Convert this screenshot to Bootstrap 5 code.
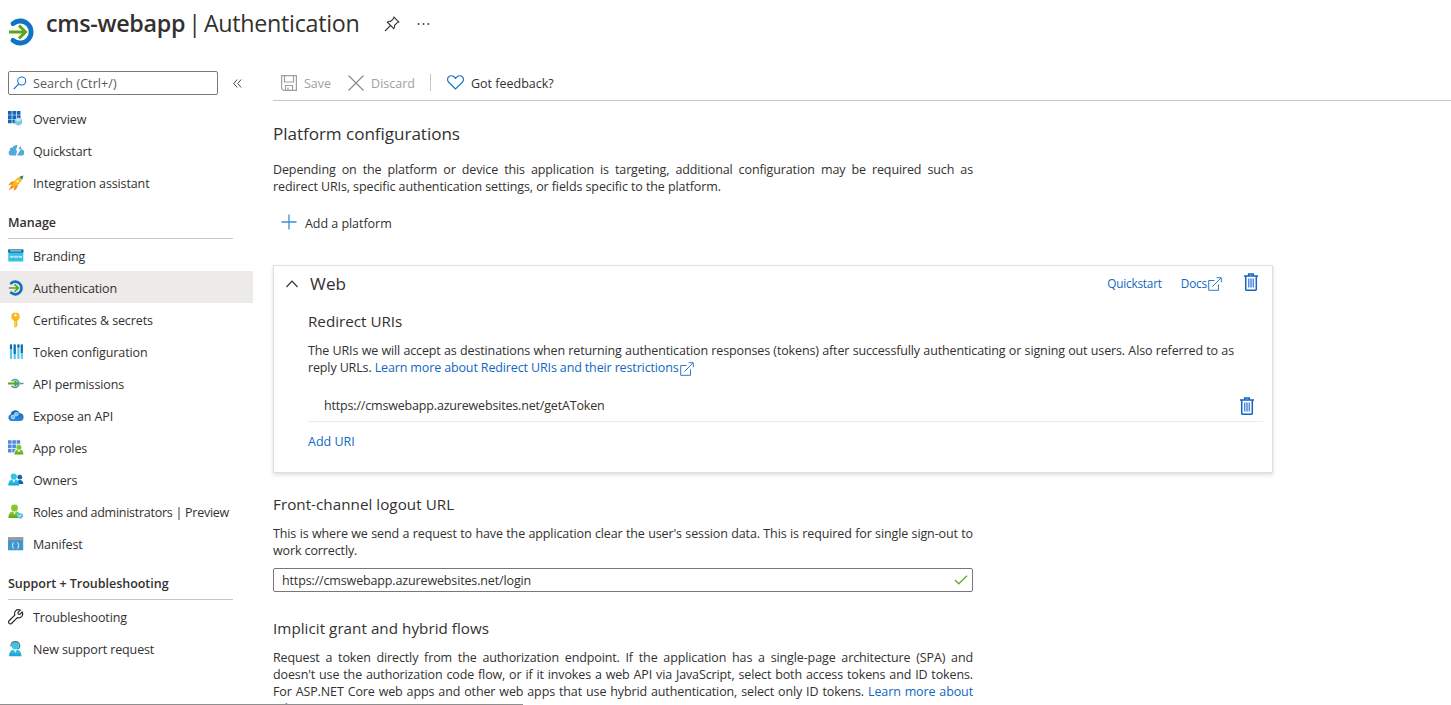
<!DOCTYPE html>
<html lang="en">
<head>
<meta charset="utf-8">
<meta name="viewport" content="width=device-width, initial-scale=1">
<title>cms-webapp | Authentication</title>
<link href="https://cdn.jsdelivr.net/npm/bootstrap@5.3.0/dist/css/bootstrap.min.css" rel="stylesheet">
<style>
  body { font: 12.5px/17px "Open Sans", "Noto Sans", sans-serif; letter-spacing: -.12px; color: #323130; height: 705px; overflow: hidden; background: #fff; }
  svg { display: block; flex: none; }
  a { color: #1068bf; text-decoration: none; }
  .blade-head { height: 71px; padding-left: 8px; }
  .blade-icon { margin-top: 18px; }
  .blade-title { font-size: 23.3px; line-height: 32px; margin: 7px 0 0 11px; font-weight: 400; letter-spacing: -.3px; word-spacing: -2.6px; white-space: nowrap; }
  .blade-title b { font-weight: 600; }
  .pin { margin: 16px 0 0 25px; }
  .dots { margin: 22px 0 0 17px; }
  .side { width: 253px; flex: none; }
  .search-row { height: 32px; padding-left: 8px; }
  .search-box { width: 210px; height: 24px; border: 1px solid #7a7876; border-radius: 2px; padding-left: 4px; color: #5b5a58; letter-spacing: .08px; }
  .search-box span { margin-left: 6px; }
  .collapse-mark { margin: 8px 0 0 15px; }
  .side-link { height: 32px; padding-left: 8px; color: #323130; white-space: nowrap; }
  .side-link span { margin-left: 9px; }
  .side-group .side-link { padding-top: 2px; }
  .side-link .tight { letter-spacing: -.26px; }
  .side-link.current { background: #edebe9; }
  .side-title { height: 41px; margin: 0 20px 0 8px; padding-top: 16px; border-bottom: 1px solid #c8c6c4; font-weight: 600; letter-spacing: -.02px; }
  .side-title.first { height: 40px; padding-top: 15px; }
  .content { margin-left: 20px; min-width: 0; }
  .toolbar { height: 30px; border-bottom: 1px solid #c8c6c4; padding: 0 0 6px 8px; white-space: nowrap; letter-spacing: 0; }
  .toolbar span { margin-left: 7px; padding-top: 2px; }
  .toolbar .off { color: #a19f9d; }
  .sep { width: 1px; height: 17px; background: #c8c6c4; margin: 0 16px 0 15px; }
  .discard-icon { margin-left: 17px; }
  h2, h3 { font-weight: 400; margin: 0; }
  h2 { font-size: 17.1px; line-height: 24px; letter-spacing: -.05px; }
  h3 { font-size: 15.2px; line-height: 20px; letter-spacing: .04px; }
  .w700 { width: 700px; }
  .full { display: block; text-align: justify; text-align-last: justify; white-space: nowrap; }
  .add-platform { margin: 18px 0 0 8px; height: 18px; letter-spacing: -.04px; }
  .add-platform span { padding-top: 2px; }
  .platform { width: 1000px; height: 208px; border: 1px solid #e1dfdd; box-shadow: 0 2px 4px rgba(0,0,0,.13); margin-top: 34px; }
  .platform-head { height: 36px; padding: 0 14px 0 12px; }
  .platform-head h2 { margin-left: 12px; letter-spacing: .1px; }
  .platform-head a { font-size: 11.8px; letter-spacing: -.2px; margin-top: -1px; }
  .platform-body { margin-left: 34px; }
  .platform-body h3 { padding-top: 9px; letter-spacing: 0; }
  .uri-note { margin-top: 11px; width: 926px; }
  .uri-note span { letter-spacing: -.135px; }
  .url { letter-spacing: -.175px; }
  .logout .url { letter-spacing: -.14px; }
  .uri-row { height: 31px; margin: 15px 9px 0 34px; border-bottom: 1px solid #edebe9; padding: 0 9px 1px 16px; }
  .add-uri { display: block; margin: 11px 0 0 34px; letter-spacing: 0; }
  .section-title { margin: 21px 0 11px; }
  .section-title.grant { margin: 26px 0 11px; }
  .logout { height: 24px; border: 1px solid #7a7876; border-radius: 2px; padding: 0 4px 0 8px; margin-top: 9px; }
  .status-edge { bottom: 0; left: 0; width: 523px; height: 1px; background: #8f8f8f; }
</style>
</head>
<body class="position-relative">
<svg width="0" height="0" class="position-absolute">
  <defs>
    <linearGradient id="blueFade" x1="0" y1="0" x2="0" y2="1"><stop offset="0" stop-color="#0a63b5"/><stop offset="1" stop-color="#2b8be0"/></linearGradient>
    <linearGradient id="cyanFade" x1="0" y1="0" x2="0" y2="1"><stop offset="0" stop-color="#35c6ea"/><stop offset="1" stop-color="#1d9fd4"/></linearGradient>
    <linearGradient id="greenFade" x1="0" y1="0" x2="0" y2="1"><stop offset="0" stop-color="#8fce36"/><stop offset="1" stop-color="#5fa516"/></linearGradient>
    <symbol id="signin" viewBox="0 0 27 28">
      <path d="M5 5.6A11 11 0 1 1 5 22.4" fill="none" stroke="#0f74c4" stroke-width="4.8" stroke-linecap="round"/>
      <path d="M1 14H17M11 7.5L17.5 14L11 20.5" fill="none" stroke="#5ea51a" stroke-width="3"/>
    </symbol>
    <symbol id="bin" viewBox="0 0 14 18">
      <path d="M1.7 3.5V16.5Q1.7 17.2 2.5 17.2H11.5Q12.3 17.2 12.3 16.5V3.5M0 3H14M4.7 3V1H9.3V3" fill="none" stroke="#1463c0" stroke-width="1.5"/>
      <path d="M4.7 5.5V14.5M7 5.5V14.5M9.3 5.5V14.5" stroke="#4c8be0" stroke-width="1.5"/>
    </symbol>
    <symbol id="outlink" viewBox="0 0 14 14">
      <path d="M6.5 3.5H.7V13.3H10.5V7.5M4.3 9.7L12.8 1.2M8.7 .7H13.3V5.3" fill="none" stroke="#3378c4" stroke-width="1"/>
    </symbol>
  </defs>
</svg>

<header class="blade-head d-flex align-items-start">
  <svg class="blade-icon" width="27" height="28"><use href="#signin"/></svg>
  <h1 class="blade-title"><b>cms-webapp</b> | Authentication</h1>
  <svg class="pin" width="16" height="16" viewBox="0 0 16 16" fill="none" stroke="#323130" stroke-width="1.1"><path d="M10 1.2L14.8 6L13.3 6.6L10.6 9.3Q11 11.2 9.8 12.6L3.4 6.2Q4.8 5 6.7 5.4L9.4 2.7ZM6.4 9.6L1 15"/></svg>
  <svg class="dots" width="13" height="4" viewBox="0 0 13 4" fill="#484644"><circle cx="1.5" cy="2" r="1"/><circle cx="6.5" cy="2" r="1"/><circle cx="11.3" cy="2" r="1"/></svg>
</header>

<div class="d-flex">
  <nav class="side">
    <div class="search-row d-flex align-items-start">
      <div class="search-box d-flex align-items-center">
        <svg width="14" height="14" viewBox="0 0 14 14" fill="none" stroke="#1a73c9" stroke-width="1.1"><circle cx="8.7" cy="5" r="4"/><path d="M5.8 7.9L.8 13"/></svg>
        <span>Search (Ctrl+/)</span>
      </div>
      <svg class="collapse-mark" width="9" height="9" viewBox="0 0 9 9" fill="none" stroke="#484644"><path d="M4.2 .5L.7 4.5L4.2 8.5M8.2 .5L4.7 4.5L8.2 8.5"/></svg>
    </div>
    <a href="#" class="side-link d-flex align-items-center">
      <svg width="16" height="16" viewBox="0 0 16 16"><path fill="#1565b5" d="M0 0h3.7v3.7H0zM4.4 0h3.7v3.7H4.4zM8.8 0h3.7v3.7H8.8zM0 4.3h3.7V8H0zM4.4 4.3h3.7V8H4.4zM8.8 4.3h3.7V8H8.8zM0 8.6h3.7v3.7H0zM4.4 8.6h3.7v3.7H4.4z"/><path fill="#7cc8ea" d="M10.3 6.6L14 8.7v4l-3.7 2L6.6 12.7v-4z"/><path fill="#c4e8f7" d="M10.3 6.6L14 8.7l-3.7 2L6.6 8.7z"/></svg><span>Overview</span></a>
    <a href="#" class="side-link d-flex align-items-center">
      <svg width="16" height="16" viewBox="0 0 16 16"><path fill="#50abd8" d="M3 12.6A2.9 2.9 0 0 1 1.8 7.4 2.6 2.6 0 0 1 4.4 4.6 3.6 3.6 0 0 1 7.6 2.2Q8.8 2 9.6 2.3L7.8 7.5H9.2L8 12.6ZM9 12.6L12.8 6.2H10.8L12 3Q13.6 4.2 13.6 6.6A3 3 0 0 1 13 12.6Z"/></svg><span>Quickstart</span></a>
    <a href="#" class="side-link d-flex align-items-center">
      <svg width="16" height="16" viewBox="0 0 16 16"><path fill="#f78d1e" d="M6 6.2Q2.5 6 .3 10.2L4 9.6L.6 15.2L6.3 12.3L5.7 15.8Q9.8 13.8 9.8 10Z"/><path fill="#fdb813" d="M3.8 10.2Q7 3.6 12 1.7L14.3 4Q12.3 9 6 12.3Z"/><path fill="#1f7190" d="M11.5 1.8L15.5.5L14.2 4.5Z"/><circle cx="9.6" cy="6.3" r="1.3" fill="#fff3c4"/></svg><span>Integration assistant</span></a>

    <div class="side-title first">Manage</div>
    <div class="side-group">
    <a href="#" class="side-link d-flex align-items-center">
      <svg width="16" height="16" viewBox="0 0 16 16"><path fill="#34bfe3" d="M.3 1.5h15v12H.3z"/><path fill="#0e5a94" d="M.3 1.5h15v3H.3z"/><path fill="#d8f0fa" d="M2 2.4h11.6v1H2z"/><path d="M2 7.8l.9 2 .9-2 .9 2 .9-2M6.2 7.8l.9 2 .9-2 .9 2 .9-2M10.4 7.8l.9 2 .9-2 .9 2 .9-2" fill="none" stroke="#dff6fd" stroke-width=".8"/></svg><span>Branding</span></a>
    <a href="#" class="side-link current d-flex align-items-center"><svg width="16" height="16"><use href="#signin"/></svg><span>Authentication</span></a>
    <a href="#" class="side-link d-flex align-items-center">
      <svg width="16" height="16" viewBox="0 0 16 16"><path fill="#fbb81c" fill-rule="evenodd" d="M5 .8H10Q12 2.5 11.8 5Q11.6 7.6 9.3 8.8V14L7.5 15.8L6 14V8.8Q3.4 7.6 3.2 5Q3 2.5 5 .8ZM7.5 2a1.2 1.2 0 1 0 .01 0Z"/><path d="M7.2 9.5V14" stroke="#ffe48a"/></svg><span>Certificates &amp; secrets</span></a>
    <a href="#" class="side-link d-flex align-items-center">
      <svg width="16" height="16" viewBox="0 0 16 16" fill="none" stroke-width="2.1"><path stroke="#59c9ea" d="M3 .5V15M6.7 .5V15M10.4 .5V15M13.8 .5V15"/><path stroke="#1467b0" d="M3 .5V5M6.7 .5V10M10.4 .5V3.5M13.8 .5V9"/></svg><span>Token configuration</span></a>
    <a href="#" class="side-link d-flex align-items-center">
      <svg width="16" height="16" viewBox="0 0 16 16" fill="none"><path d="M3.7 5.2A4 4 0 1 1 3.7 9.8M12 7.5H15.5" stroke="#4a96c4" stroke-width="1.6"/><path d="M0 7.5H8M6.5 5L9.5 7.5L6.5 10" stroke="#5ea51a" stroke-width="1.8"/></svg><span>API permissions</span></a>
    <a href="#" class="side-link d-flex align-items-center">
      <svg width="16" height="16" viewBox="0 0 16 16"><path fill="url(#blueFade)" d="M3.2 13A3.3 3.3 0 0 1 2.6 6.6 4.7 4.7 0 0 1 11.6 5.2 3.9 3.9 0 0 1 11.8 13Z"/><circle cx="8.4" cy="6.2" r="1.7" fill="#7fb6ea" stroke="#c6e2fa" stroke-width="1"/><circle cx="5" cy="9" r="1.8" fill="#7fb6ea" stroke="#c6e2fa" stroke-width="1"/></svg><span>Expose an API</span></a>
    <a href="#" class="side-link d-flex align-items-center">
      <svg width="16" height="16" viewBox="0 0 16 16"><path fill="#4f88dd" d="M0 .2h3.6v3.6H0zM4.3 .2h3.6v3.6H4.3zM8.6 .2h3.6v3.6H8.6zM0 4.5h3.6v3.6H0zM4.3 4.5h3.6v3.6H4.3zM8.6 4.5h3.6v3.6H8.6zM0 8.8h3.6v3.6H0zM4.3 8.8h3.6v3.6H4.3z"/><path fill="#fff" d="M5.6 15Q6 9.5 8.3 9Q7.5 4.2 11 4Q14.5 4.2 14 9Q16 10 16 15Z"/><path fill="url(#greenFade)" d="M6.4 14.4Q6.6 10.2 9.3 9.6H12.7Q15.2 10.2 15.4 14.4Z"/><circle cx="10.9" cy="7.3" r="2.5" fill="#83c42c"/><path fill="#fff" d="M9.6 9.8H12.2L10.9 12.6Z"/></svg><span>App roles</span></a>
    <a href="#" class="side-link d-flex align-items-center">
      <svg width="16" height="16" viewBox="0 0 16 16"><circle cx="11.8" cy="5.2" r="2.4" fill="#1264ae"/><path fill="#1264ae" d="M9 12Q9.2 8 11.8 8Q15 8 15.3 12Z"/><circle cx="5.8" cy="4.6" r="3.1" fill="#35c0e6"/><path fill="url(#cyanFade)" d="M.3 13.5Q.5 8.3 3.6 7.6H8Q11 8.3 11.3 13.5Z"/><path fill="#fff" d="M4.5 7.8H7.2L5.8 11Z"/></svg><span>Owners</span></a>
    <a href="#" class="side-link d-flex align-items-center">
      <svg width="16" height="16" viewBox="0 0 16 16"><circle cx="6.5" cy="4" r="3.4" fill="#86c72e"/><path fill="url(#greenFade)" d="M.4 14Q.5 8.3 4 7.5H9Q12.3 8.3 12.6 14Z"/><path fill="#e8f6d5" d="M5 7.6H8L6.5 11Z"/><path fill="#5bc4e8" d="M8 9.5L11.5 9L15 10V13L12.5 15L9.5 13Z"/><path d="M9.8 11.2l1.2 1.3 2.3-1.8" fill="none" stroke="#d5f1fb"/></svg><span class="tight">Roles and administrators | Preview</span></a>
    <a href="#" class="side-link d-flex align-items-center">
      <svg width="16" height="16" viewBox="0 0 16 16"><path fill="#3f97cc" d="M0 1.3h15.2v13H0z"/><path fill="#999b9c" d="M0 1.3h15.2v3H0z"/><path d="M5.8 6.5Q4.8 6.5 4.8 8T4 9.5Q4.8 9.5 4.8 11T5.8 12.3M9.3 6.5Q10.3 6.5 10.3 8T11.1 9.5Q10.3 9.5 10.3 11T9.3 12.3" fill="none" stroke="#d9f0fb" stroke-width="1"/></svg><span>Manifest</span></a>
    </div>

    <div class="side-title">Support + Troubleshooting</div>
    <div class="side-group">
    <a href="#" class="side-link d-flex align-items-center">
      <svg width="16" height="16" viewBox="0 0 16 16" fill="none" stroke="#2b2a29" stroke-width="1.2"><path d="M14.2 3L11.8 5.4L10.2 5L9.9 3.6L12.3 1.1Q9.5 0 7.6 1.9Q6 3.7 6.8 6.1L.9 12Q0 13.3 1.1 14.4Q2.3 15.5 3.5 14.5L9.3 8.6Q11.8 9.4 13.6 7.6Q15.4 5.6 14.2 3Z"/></svg><span>Troubleshooting</span></a>
    <a href="#" class="side-link d-flex align-items-center">
      <svg width="16" height="16" viewBox="0 0 16 16"><circle cx="7.3" cy="4.7" r="3.6" fill="#35c6ea"/><path fill="url(#cyanFade)" d="M1 15.2Q1.2 9.5 5 8.7H9.6Q13.3 9.5 13.5 15.2Z"/><path fill="#d9f5fc" d="M5.7 8.8H8.9L7.3 12Z"/><path d="M3 5.6Q2.6 .6 7.3 .6T11.7 5.6Q11.5 7.5 9.5 8" fill="none" stroke="#4e6e7a" stroke-width="1.1"/></svg><span>New support request</span></a>
    </div>
  </nav>

  <main class="content flex-grow-1">
    <div class="toolbar d-flex align-items-center">
      <svg width="16" height="16" viewBox="0 0 16 16" fill="none" stroke="#a19f9d" stroke-width="1.2"><path d="M.6 .6H15.4V15.4H2.6L.6 13.4ZM3.5 .6V7H12.5V.6M4.5 15V10.5H11.5V15M7 12.5V15"/></svg>
      <span class="off">Save</span>
      <svg class="discard-icon" width="16" height="16" viewBox="0 0 16 16" fill="none" stroke="#8a8886" stroke-width="1.1"><path d="M.5 .5L15.5 15.5M15.5 .5L.5 15.5"/></svg>
      <span class="off">Discard</span>
      <i class="sep"></i>
      <svg width="17" height="15" viewBox="0 0 17 15" fill="none" stroke="#1a73c9" stroke-width="1.2"><path d="M8.5 14L1.7 7.3A3.8 3.8 0 0 1 7 1.8L8.5 3.3L10 1.8A3.8 3.8 0 0 1 15.3 7.3Z"/></svg>
      <span>Got feedback?</span>
    </div>
    <h2 style="margin-top:21px">Platform configurations</h2>
    <p class="w700 mb-0" style="margin-top:15px"><span class="full">Depending on the platform or device this application is targeting, additional configuration may be required such as</span><span style="letter-spacing:-.095px">redirect URIs, specific authentication settings, or fields specific to the platform.</span></p>
    <div class="add-platform d-flex align-items-center">
      <svg width="16" height="16" viewBox="0 0 16 16" stroke="#3a8fd6" stroke-width="1.3"><path d="M8 .5V15.5M.5 8H15.5"/></svg>
      <span class="ms-2">Add a platform</span>
    </div>

    <section class="platform">
      <div class="platform-head d-flex align-items-center">
        <svg width="12" height="8" viewBox="0 0 12 8" fill="none" stroke="#323130" stroke-width="1.2"><path d="M.5 7L6 1.2L11.5 7"/></svg>
        <h2>Web</h2>
        <a href="#" class="ms-auto">Quickstart</a>
        <a href="#" style="margin-left:19px">Docs</a>
        <svg width="14" height="14" style="margin-left:1px"><use href="#outlink"/></svg>
        <svg width="14" height="18" style="margin:-4px 0 0 22px"><use href="#bin"/></svg>
      </div>
      <div class="platform-body">
        <h3>Redirect URIs</h3>
        <div class="uri-note"><span class="full">The URIs we will accept as destinations when returning authentication responses (tokens) after successfully authenticating or signing out users. Also referred to as</span>
          <div class="d-flex align-items-center"><span>reply URLs. <a href="#">Learn more about Redirect URIs and their restrictions</a></span><svg width="14" height="14" style="margin:2px 0 0 1px"><use href="#outlink"/></svg></div></div>
      </div>
      <div class="uri-row d-flex align-items-center justify-content-between"><span class="url">https://cmswebapp.azurewebsites.net/getAToken</span><svg width="14" height="18"><use href="#bin"/></svg></div>
      <a href="#" class="add-uri">Add URI</a>
    </section>

    <h3 class="section-title">Front-channel logout URL</h3>
    <p class="w700 mb-0"><span class="full">This is where we send a request to have the application clear the user's session data. This is required for single sign-out to</span>work correctly.</p>
    <div class="logout w700 d-flex align-items-center justify-content-between"><span class="url">https://cmswebapp.azurewebsites.net/login</span><svg width="14" height="10" viewBox="0 0 14 10" fill="none" stroke="#6aa728" stroke-width="1.3"><path d="M1 5L4.8 8.8L13 .8"/></svg></div>
    <h3 class="section-title grant">Implicit grant and hybrid flows</h3>
    <div class="w700"><span class="full">Request a token directly from the authorization endpoint. If the application has a single-page architecture (SPA) and</span><span class="full">doesn't use the authorization code flow, or if it invokes a web API via JavaScript, select both access tokens and ID tokens.</span><span class="full">For ASP.NET Core web apps and other web apps that use hybrid authentication, select only ID tokens. <a href="#">Learn more about</a></span><a href="#">tokens.</a></div>
  </main>
</div>
<div class="status-edge position-absolute"></div>
<script src="https://cdn.jsdelivr.net/npm/bootstrap@5.3.0/dist/js/bootstrap.bundle.min.js"></script>
</body>
</html>
